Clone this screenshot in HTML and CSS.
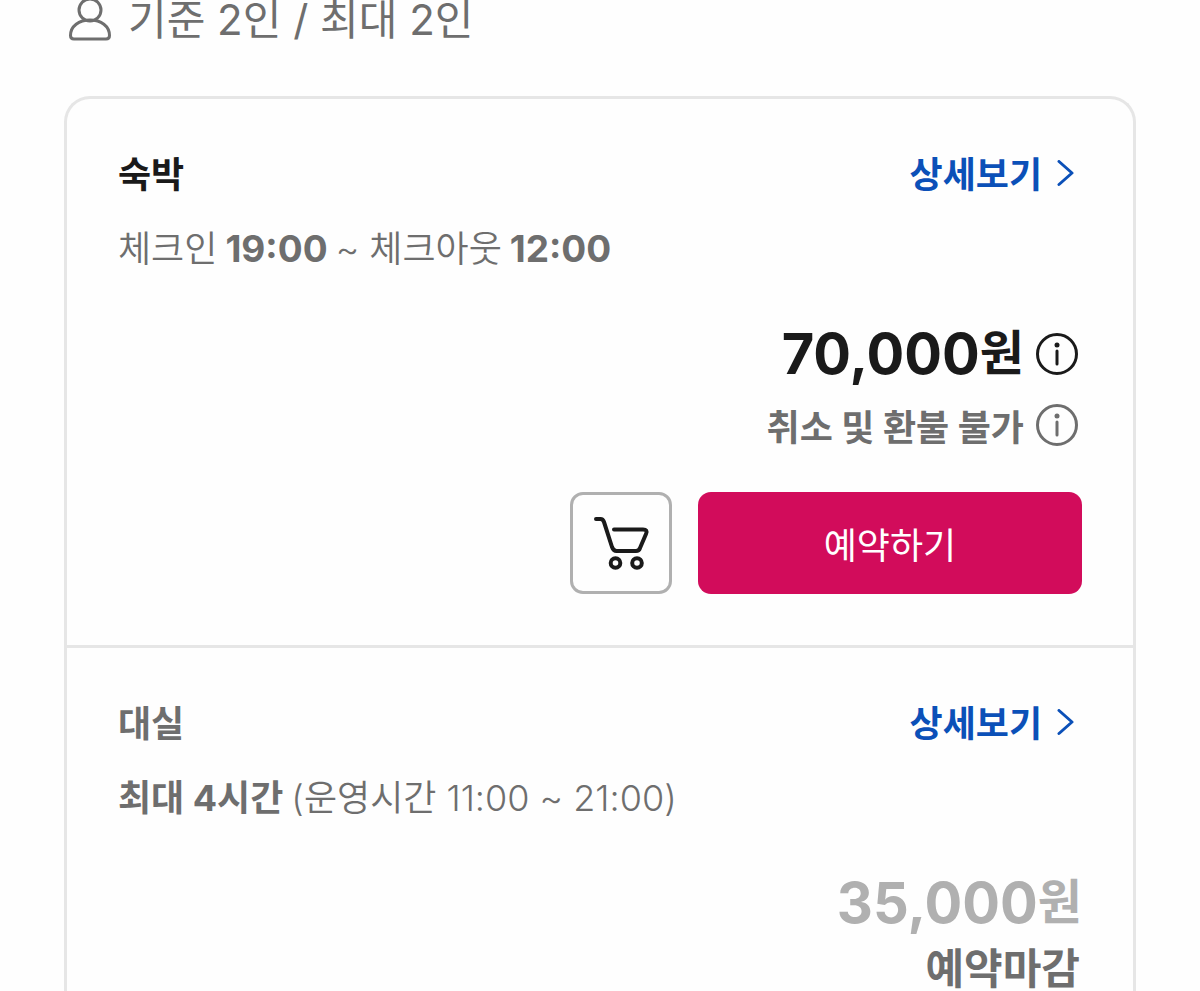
FILE: index.html
```html
<!DOCTYPE html>
<html lang="ko">
<head>
    <meta charset="UTF-8">
    <meta name="viewport" content="width=device-width, initial-scale=1.0">
    <title>객실 예약</title>
    <link rel="stylesheet" href="styles.css">
</head>
<body>
    <main class="page">
        <p class="capacity">
            <svg class="person-icon" viewBox="0 0 44 44" aria-hidden="true">
                <circle cx="22" cy="12" r="11"/>
                <path d="M22 22C11 22 2.500 28 2.500 37.500Q2.500 41 6 41H38Q41.500 41 41.500 37.500C41.500 28 33 22 22 22Z"/>
            </svg>
            기준 2인 / 최대 2인
        </p>

        <div class="card">
            <!-- Overnight stay -->
            <section class="option">
                <div class="option-header">
                    <h2>숙박</h2>
                    <a href="#" class="detail-link">상세보기
                        <svg class="arrow-icon" viewBox="0 0 20 30" aria-hidden="true"><path d="M3 1.500L16 13L3 24.500"/></svg>
                    </a>
                </div>
                <p class="time">체크인 <time>19:00</time> ~ 체크아웃 <time>12:00</time></p>
                <div class="price-row">
                    <p class="price">70,000<span>원</span></p>
                    <button type="button" class="info-button dark" aria-label="요금 안내">
                        <svg viewBox="0 0 42 42"><circle cx="21" cy="21" r="19.500"/><path d="M21 18V31"/><circle class="dot" cx="21" cy="12" r="2.500"/></svg>
                    </button>
                </div>
                <div class="refund-row">
                    <p>취소 및 환불 불가</p>
                    <button type="button" class="info-button" aria-label="취소 및 환불 안내">
                        <svg viewBox="0 0 42 42"><circle cx="21" cy="21" r="19.500"/><path d="M21 18V31"/><circle class="dot" cx="21" cy="12" r="2.500"/></svg>
                    </button>
                </div>
                <div class="actions">
                    <button type="button" class="cart-button" aria-label="장바구니">
                        <svg viewBox="0 0 60 60">
                            <path d="M5 6H9.500Q12 6 13 9L21 34Q22.500 38 25.500 38H45Q48 38 49 35L55 21Q57 16.500 52 16.500H23"/>
                            <circle cx="24.500" cy="50" r="4.800"/>
                            <circle cx="46" cy="50" r="4.800"/>
                        </svg>
                    </button>
                    <button type="button" class="reserve-button">예약하기</button>
                </div>
            </section>

            <!-- Day use -->
            <section class="option closed">
                <div class="option-header">
                    <h2>대실</h2>
                    <a href="#" class="detail-link">상세보기
                        <svg class="arrow-icon" viewBox="0 0 20 30" aria-hidden="true"><path d="M3 1.500L16 13L3 24.500"/></svg>
                    </a>
                </div>
                <p class="time"><strong>최대 4시간</strong> (운영시간 11:00 ~ 21:00)</p>
                <div class="price-row">
                    <p class="price">35,000<span>원</span></p>
                </div>
                <p class="closed-text">예약마감</p>
            </section>
        </div>
    </main>
</body>
</html>
```
FILE: styles.css
```css
* { box-sizing: border-box; }
body { font-family: Inter, "Noto Sans CJK KR", sans-serif; background-color: #fefefe; color: #6e6e6e; margin: 0; font-size: 36px; line-height: 48px; }
h2, p { margin: 0; font-size: 36px; }
button { font-family: inherit; cursor: pointer; }
svg { display: block; fill: none; stroke: currentColor; stroke-linecap: round; stroke-linejoin: round; }
.page { display: flex; flex-direction: column; height: 100vh; padding: 0 64px; overflow: hidden; }
.capacity { display: flex; align-items: center; flex-shrink: 0; gap: 16px; height: 40px; margin-bottom: 56px; padding-left: 4px; font-size: 42px; font-weight: 400; }
.person-icon { width: 44px; height: 44px; stroke-width: 3; }
.card { flex: 1 0 auto; border: 3px solid #e6e6e6; border-bottom: none; border-radius: 26px 26px 0 0; }
.option { padding: 52px 51px 51px; }
.option + .option { border-top: 3px solid #e6e6e6; padding-bottom: 0; }
.option-header { display: flex; justify-content: space-between; margin-bottom: 26px; }
.option-header h2 { color: #1a1a1a; font-weight: 700; }
.option.closed h2 { color: #6e6e6e; }
.detail-link { display: flex; align-items: center; gap: 14px; padding-right: 6px; color: #0b50b8; font-weight: 700; text-decoration: none; }
.arrow-icon { width: 20px; height: 30px; stroke-width: 3; }
.time { display: flex; gap: 8px; font-weight: 350; }
.time strong, .time time { font-weight: 700; }
.time time { font-size: 37px; }
.price-row, .refund-row { display: flex; justify-content: flex-end; gap: 12px; padding-right: 4px; }
.price-row { align-items: center; margin-top: 49px; }
.price { color: #1a1a1a; font-size: 56px; font-weight: 700; line-height: 64px; }
.price span { font-size: 48px; line-height: 1; vertical-align: 4px; }
.closed .price { color: #b0b0b0; }
.closed .price-row { padding-right: 0; }
.refund-row { align-items: flex-start; margin-top: 18px; font-weight: 700; }
.info-button { width: 42px; height: 42px; padding: 0; border: none; background: none; color: #6e6e6e; }
.info-button svg { stroke-width: 3; }
.info-button .dot { fill: currentColor; stroke: none; }
.info-button.dark { color: #1a1a1a; }
.actions { display: flex; justify-content: flex-end; gap: 26px; margin-top: 40px; }
.cart-button { display: flex; align-items: center; justify-content: center; width: 102px; height: 102px; padding: 0; border: 3px solid #b0b0b0; border-radius: 13px; background: none; color: #1a1a1a; }
.cart-button svg { width: 60px; height: 60px; stroke-width: 4; }
.reserve-button { flex-basis: 384px; height: 102px; border: none; border-radius: 13px; background-color: #d20c5b; color: #fff; font-size: 36px; font-weight: 400; }
.closed-text { margin-top: 10px; padding-right: 2px; font-size: 42px; font-weight: 700; text-align: right; }
```
